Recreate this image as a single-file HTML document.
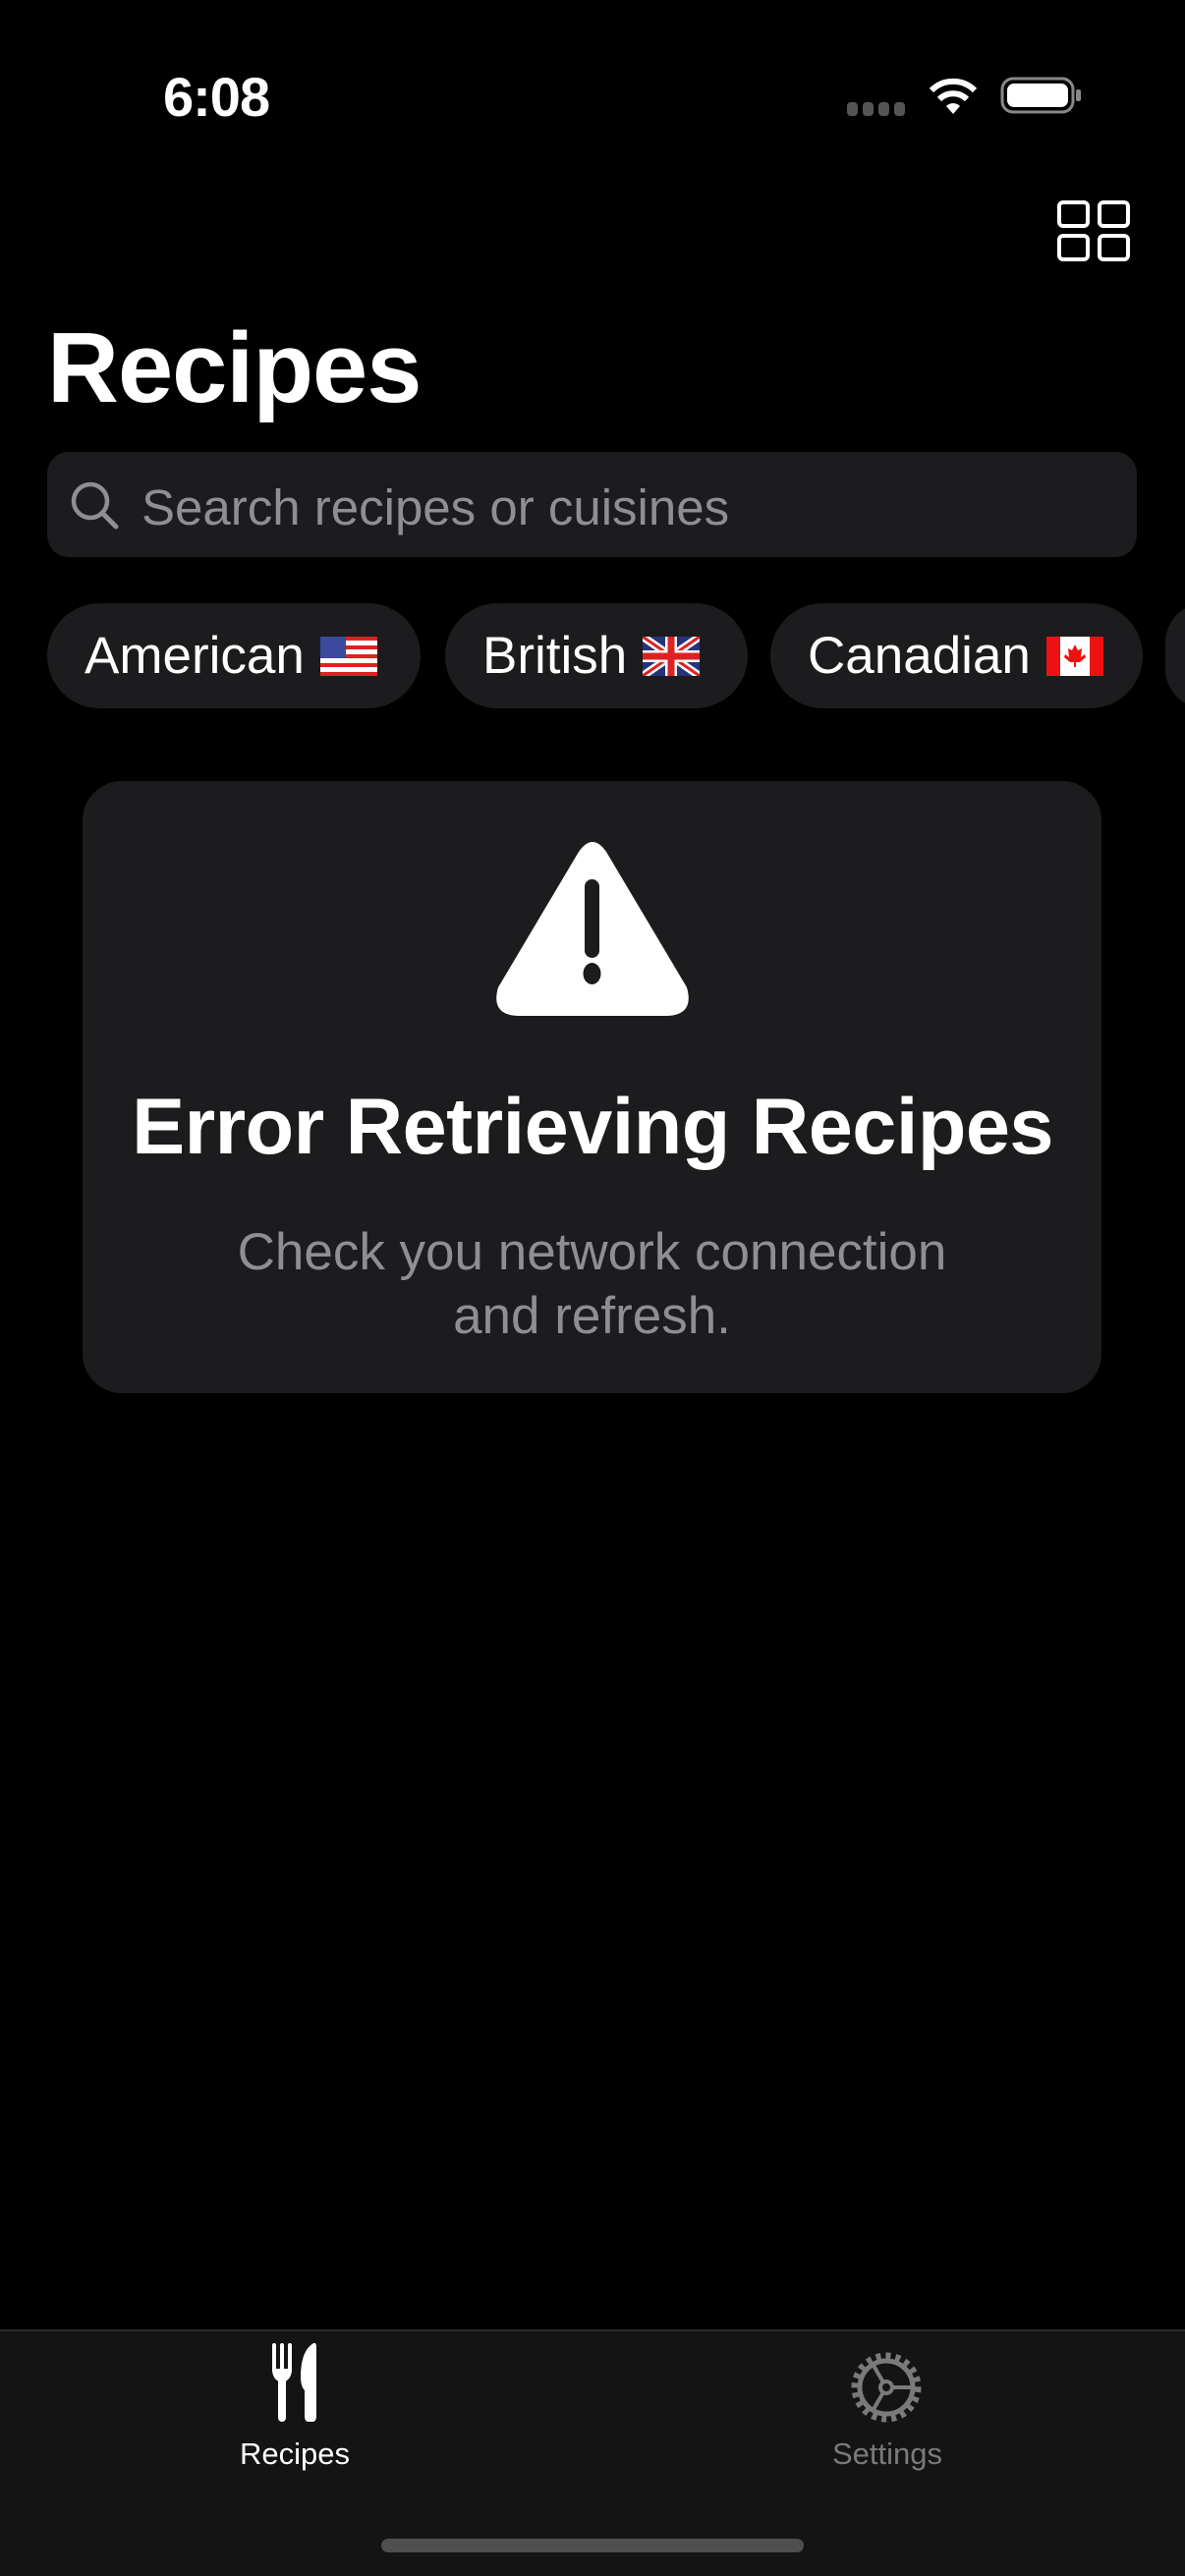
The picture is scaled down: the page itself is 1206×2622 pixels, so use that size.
<!DOCTYPE html>
<html><head><meta charset="utf-8"><style>
*{margin:0;padding:0;box-sizing:border-box}
body{width:1206px;height:2622px;background:#000;position:relative;overflow:hidden;font-family:"Liberation Sans",sans-serif;color:#fff}
.a{position:absolute}
.chip{position:absolute;top:614px;height:107px;border-radius:54px;background:#1c1c1e;display:flex;align-items:center;padding-left:38px;font-size:53px;white-space:nowrap}
.chip svg{margin-left:16px}
</style></head><body>
<div class="a" style="left:166px;top:66px;font-size:56px;font-weight:bold;letter-spacing:-1px">6:08</div>
<svg class="a" style="left:862px;top:104px" width="62" height="14"><g fill="#555"><rect x="0" y="0" width="11" height="14" rx="4"/><rect x="16" y="0" width="11" height="14" rx="4"/><rect x="32" y="0" width="11" height="14" rx="4"/><rect x="48" y="0" width="11" height="14" rx="4"/></g></svg>
<svg class="a" style="left:944px;top:78px" width="52" height="38" viewBox="0 0 52 38"><path d="M26 38 L19 30 A10 10 0 0 1 33 30 Z" fill="#fff"/><path d="M12 23 A20 20 0 0 1 40 23" stroke="#fff" stroke-width="6" fill="none"/><path d="M4 14 A31 31 0 0 1 48 14" stroke="#fff" stroke-width="6" fill="none"/></svg>
<svg class="a" style="left:1018px;top:78px" width="84" height="38" viewBox="0 0 84 38"><rect x="2" y="2" width="72" height="34" rx="11" fill="none" stroke="#888" stroke-width="3"/><rect x="7" y="7" width="62" height="24" rx="7" fill="#fff"/><rect x="77" y="13" width="5" height="12" rx="2" fill="#888"/></svg>
<svg class="a" style="left:1076px;top:204px" width="74" height="62" viewBox="0 0 74 62"><g fill="none" stroke="#fff" stroke-width="4"><rect x="2" y="2" width="29" height="24" rx="4"/><rect x="43" y="2" width="29" height="24" rx="4"/><rect x="2" y="36" width="29" height="24" rx="4"/><rect x="43" y="36" width="29" height="24" rx="4"/></g></svg>
<div class="a" style="left:48px;top:318px;font-size:101px;font-weight:bold;letter-spacing:-1px">Recipes</div>
<div class="a" style="left:48px;top:460px;width:1109px;height:107px;border-radius:22px;background:#1c1c1e"></div>
<svg class="a" style="left:70px;top:488px" width="52" height="52" viewBox="0 0 52 52"><circle cx="22" cy="22" r="17" fill="none" stroke="#8e8e93" stroke-width="4.5"/><path d="M34 34 L48 48" stroke="#8e8e93" stroke-width="5" stroke-linecap="round"/></svg>
<div class="a" style="left:144px;top:487px;font-size:51px;color:#8e8e93">Search recipes or cuisines</div>
<div class="chip" style="left:48px;width:380px">American<svg width="58" height="40" viewBox="0 0 58 40"><rect width="58" height="40" rx="4" fill="#fff"/><g fill="#d22"><rect y="0" width="58" height="4"/><rect y="9" width="58" height="4"/><rect y="18" width="58" height="4"/><rect y="27" width="58" height="4"/><rect y="36" width="58" height="4"/></g><rect width="26" height="22" fill="#3b4a9c"/></svg></div>
<div class="chip" style="left:453px;width:308px">British<svg width="58" height="40" viewBox="0 0 58 40"><rect width="58" height="40" rx="4" fill="#24337a"/><path d="M0 0L58 40M58 0L0 40" stroke="#fff" stroke-width="8"/><path d="M0 0L58 40M58 0L0 40" stroke="#d22" stroke-width="3"/><path d="M29 0V40M0 20H58" stroke="#fff" stroke-width="12"/><path d="M29 0V40M0 20H58" stroke="#d22" stroke-width="7"/></svg></div>
<div class="chip" style="left:784px;width:379px">Canadian<svg width="58" height="40" viewBox="0 0 58 40"><rect width="58" height="40" rx="4" fill="#fff"/><rect width="14" height="40" fill="#e11"/><rect x="44" width="14" height="40" fill="#e11"/><path d="M29 8l3 6 4-2-1 9 4-3 1 3-6 5h-4v5h-2v-5h-4l-6-5 1-3 4 3-1-9 4 2z" fill="#e11"/></svg></div>
<div class="a" style="left:1186px;top:614px;width:80px;height:107px;border-radius:54px;background:#1c1c1e"></div>
<div class="a" style="left:84px;top:795px;width:1037px;height:623px;border-radius:40px;background:#1c1c1e"></div>
<svg class="a" style="left:503px;top:853px" width="200" height="184" viewBox="0 0 200 184"><path d="M86 14 Q100 -6 114 14 L196 152 Q204 180 176 181 L24 181 Q-4 180 4 152 Z" fill="#fff"/><rect x="92" y="42" width="15" height="80" rx="7.5" fill="#1c1c1e"/><ellipse cx="99.5" cy="138" rx="9" ry="11" fill="#1c1c1e"/></svg>
<div class="a" style="left:60px;top:1101px;width:1086px;text-align:center;font-size:81px;font-weight:bold;letter-spacing:-0.5px">Error Retrieving Recipes</div>
<div class="a" style="left:84px;top:1242px;width:1037px;text-align:center;font-size:53px;line-height:65px;color:#8e8e93">Check you network connection<br>and refresh.</div>
<div class="a" style="left:0;top:2371px;width:1206px;height:251px;background:#141414;border-top:2px solid #2a2a2a"></div>
<svg class="a" style="left:274px;top:2383px" width="54" height="84" viewBox="0 0 54 84"><g fill="#fff"><rect x="3" y="2" width="4" height="30" rx="2"/><rect x="11" y="2" width="4" height="30" rx="2"/><rect x="19" y="2" width="4" height="30" rx="2"/><path d="M3 28 Q3 40 13 42 Q23 40 23 28 Z"/><rect x="9" y="36" width="8" height="46" rx="4"/><path d="M40 82 Q36 82 36 76 L36 50 Q32 46 32 36 Q32 10 45 2 Q48 1 48 6 L48 76 Q48 82 44 82 Z"/></g></svg>
<div class="a" style="left:200px;top:2480px;width:200px;text-align:center;font-size:31px">Recipes</div>
<svg class="a" style="left:862px;top:2390px" width="80" height="80" viewBox="0 0 80 80"><g stroke="#7a7a7a" fill="none"><circle cx="40" cy="40" r="32" stroke-width="7" stroke-dasharray="5 5"/><circle cx="40" cy="40" r="27" stroke-width="5"/><circle cx="40" cy="40" r="6" stroke-width="4"/><path d="M46 40H67M37 35L26 16M37 45L26 64" stroke-width="4"/></g></svg>
<div class="a" style="left:803px;top:2480px;width:200px;text-align:center;font-size:31px;color:#7a7a7a">Settings</div>
<div class="a" style="left:388px;top:2584px;width:430px;height:14px;border-radius:7px;background:#4f4f4f"></div>
</body></html>
